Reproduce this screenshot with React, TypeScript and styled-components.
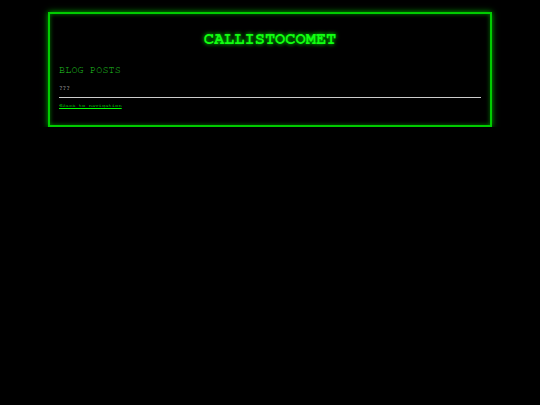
import React from "react"
import styled, { createGlobalStyle } from "styled-components"

const GlobalStyle = createGlobalStyle`
  html, body {
    margin: 0;
    background: #000;
  }
  body {
    padding: 12px 0 0;
    font-family: "Nimbus Mono PS", "FreeMono", "Courier New", "Liberation Mono", monospace;
  }
`

const Frame = styled.main`
  width: 422px;
  margin: 0 auto;
  padding: 9px 9px 0;
  height: 102px;
  border: 2px solid #0c0;
  box-shadow: 0 0 6px #0a0, inset 0 0 4px #070;
  background: #000;
  font-size: 6px;
`

const Title = styled.h1`
  margin: 7px 0 18px;
  text-align: center;
  font-size: 17px;
  font-weight: bold;
  color: #1f1;
  text-shadow: 0 0 4px #0f0;
`

const SectionTitle = styled.h2`
  margin: 0 0 10px;
  font-size: 10px;
  font-weight: normal;
  color: #2c2;
  letter-spacing: 0.2px;
`

const Entry = styled.p`
  margin: 0 0 6px;
  font-size: 6px;
  color: #ddd;
`

const Rule = styled.hr`
  margin: 0 0 5px;
  border: none;
  border-top: 1px solid #ccc;
`

const Nav = styled.p`
  margin: 0;
  font-size: 5.5px;
`

const BackLink = styled.a`
  color: #0f0;
  text-decoration: underline;
`

export default function App() {
  return (
    <>
      <GlobalStyle />
      <Frame>
        <Title>CALLISTOCOMET</Title>
        <SectionTitle>BLOG POSTS</SectionTitle>
        <Entry>???</Entry>
        <Rule />
        <Nav>
          <BackLink href="#">«Back to navigation</BackLink>
        </Nav>
      </Frame>
    </>
  )
}
